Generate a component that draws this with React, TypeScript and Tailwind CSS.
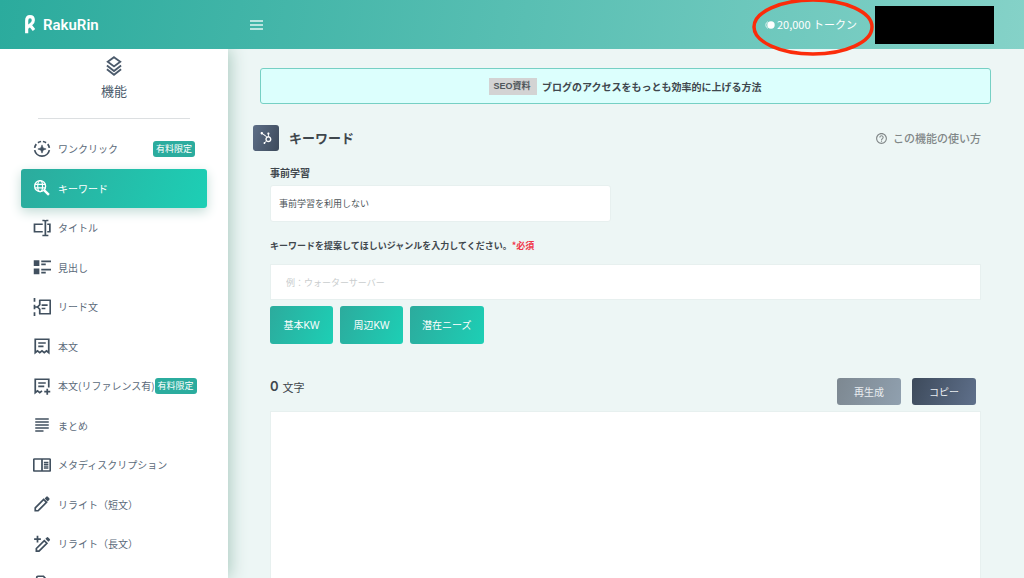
import type { ReactNode } from "react";
import { FaHubspot } from "react-icons/fa";
import { MdHelpOutline } from "react-icons/md";

function Icon({ children }: { children: ReactNode }) {
  return (
    <svg
      viewBox="0 0 24 24"
      className="size-[18px] shrink-0"
      fill="none"
      stroke="currentColor"
      strokeWidth="2.3"
      aria-hidden="true"
    >
      {children}
    </svg>
  );
}

type Item = { label?: string; icon: ReactNode; active?: boolean; badge?: "end" | "inline" };

const items: Item[] = [
  {
    label: "ワンクリック",
    badge: "end",
    icon: (
      <Icon>
        <path d="M2.2 13.5a10 10 0 0 0 19.6 0" />
        <path d="M2.2 10.5A10 10 0 0 1 4.4 5.5M6.6 3.6A10 10 0 0 1 10.8 2M13.2 2a10 10 0 0 1 4.2 1.6M19.6 5.5a10 10 0 0 1 2.2 5" />
        <path d="M12 6.5l1.5 4 4 1.5-4 1.5-1.5 4-1.5-4-4-1.5 4-1.5z" fill="currentColor" stroke="currentColor" strokeWidth="0.8" />
      </Icon>
    ),
  },
  {
    label: "キーワード",
    active: true,
    icon: (
      <Icon>
        <circle cx="9.5" cy="9.5" r="7.3" strokeWidth="1.8" />
        <ellipse cx="9.5" cy="9.5" rx="3.2" ry="7.3" strokeWidth="1.6" />
        <path d="M2.5 7.2h14M2.5 11.8h14" strokeWidth="1.6" />
        <path d="M14.8 14.8l6.4 6.4" strokeWidth="3.2" />
      </Icon>
    ),
  },
  {
    label: "タイトル",
    icon: (
      <Icon>
        <path d="M13 7H2v10h11M19 7h3.500v10H19" />
        <path d="M12.5 2H15q1.5 0 1.5 1.5Q16.5 2 18 2h2.5M16.5 3v18M12.5 22H15q1.5 0 1.5-1.5Q16.5 22 18 22h2.5" />
      </Icon>
    ),
  },
  {
    label: "見出し",
    icon: (
      <Icon>
        <path d="M1 3h7.5v7.5H1zM1 14h7.5v7.5H1z" fill="currentColor" stroke="none" />
        <path d="M11 4.5h13M11 8.5h6M11 15.5h13M11 19.5h6" />
      </Icon>
    ),
  },
  {
    label: "リード文",
    icon: (
      <Icon>
        <path d="M2 0v5M2 9v6M2 19v5M2 12h5" />
        <path d="M9 3h14v18H9v-6l-3-3 3-3z" strokeLinejoin="round" />
        <path d="M11.500 9.500h8M11.500 14h5" />
      </Icon>
    ),
  },
  {
    label: "本文",
    icon: (
      <Icon>
        <path d="M3 3h18v18l-3-2.5-3 2.5-3-2.5-3 2.5-3-2.5-3 2.5z" />
        <path d="M7 8h10M7 12.5h7" />
      </Icon>
    ),
  },
  {
    label: "本文(リファレンス有)",
    badge: "inline",
    icon: (
      <Icon>
        <path d="M21 14V3H3v18l3-2.5 3 2.5 3-2.5M7 8h10M7 12.5h8M19 15.5v8M15 19.5h8" />
      </Icon>
    ),
  },
  {
    label: "まとめ",
    icon: (
      <Icon>
        <path d="M3 4h18M3 8h18M3 12h18M3 16h18M3 20h11" />
      </Icon>
    ),
  },
  {
    label: "メタディスクリプション",
    icon: (
      <Icon>
        <rect x="1" y="4" width="22" height="16" rx="1" />
        <path d="M12 4v16" />
        <path d="M14.5 8.5h6M14.5 11h6M14.5 13.5h6M14.5 16h6" strokeWidth="1.7" />
      </Icon>
    ),
  },
  {
    label: "リライト（短文）",
    icon: (
      <Icon>
        <path d="M3 17.200v3.800h3.800L18 9.800 14.200 6z" />
        <path d="M15.500 4.500l2.200-2.200q1-1 2 0l2 2q1 1 0 2L19.500 8.500z" fill="currentColor" stroke="none" />
      </Icon>
    ),
  },
  {
    label: "リライト（長文）",
    icon: (
      <Icon>
        <path d="M6 1v9M1.5 5.5h9" />
        <path d="M4.500 18v3.500H8L18.500 11 15 7.500z" />
        <path d="M16.500 5l1.800-1.800q1-1 2 0l2 2q1 1 0 2L20.500 9z" fill="currentColor" stroke="none" />
      </Icon>
    ),
  },
  {
    icon: (
      <Icon>
        <path d="M5 22V4.500Q5 3 6.500 3H14l2.500 3v16" />
      </Icon>
    ),
  },
];

function Badge() {
  return (
    <span className="rounded-[3px] bg-[#2bac9e] px-[3px] text-[9px] leading-4 whitespace-nowrap text-white">有料限定</span>
  );
}

function Sidebar() {
  return (
    <aside className="z-10 w-[228px] shrink-0 overflow-hidden bg-white shadow-[2px_0_16px_#a9c9be]">
      <div className="flex flex-col items-center pt-[7px] text-[#4b5a6b]">
        <svg viewBox="0 0 24 24" className="size-5" fill="none" stroke="currentColor" strokeWidth="2.2" aria-hidden="true">
          <path d="M12 1.5L19.5 7 12 12.5 4.5 7zM3.500 11.500l8.500 6.500 8.500-6.500M3.500 16l8.500 6.500 8.500-6.500" />
        </svg>
        <h2 className="mt-[5px] text-[13px] leading-5">機能</h2>
      </div>
      <hr className="mx-[38px] mt-[17px] border-[#dcdfe1]" />
      <nav className="mt-[10px] px-[21px]">
        <ul className="grid h-[474px] auto-rows-fr">
          {items.map((item, index) => (
            <li key={index}>
              <a
                href="#"
                className={
                  item.active
                    ? "flex h-full items-center rounded-[3px] bg-linear-[110deg] from-[#2cab9d] to-[#1dcfb5] pl-3 text-white shadow-[0_4px_12px_#c4dcd7]"
                    : "flex h-full items-center pl-3 text-[#41505f]"
                }
              >
                {item.icon}
                {item.label && (
                  <span
                    className={
                      item.active
                        ? "ml-[7px] text-[10px] whitespace-nowrap"
                        : "ml-[7px] text-[10px] whitespace-nowrap text-[#5b6a7a]"
                    }
                  >
                    {item.label}
                  </span>
                )}
                {item.badge && (
                  <span className={item.badge === "end" ? "mr-3 ml-auto flex" : "flex"}>
                    <Badge />
                  </span>
                )}
              </a>
            </li>
          ))}
        </ul>
      </nav>
    </aside>
  );
}

function Header() {
  return (
    <header className="relative z-20 flex h-[49px] shrink-0 items-center bg-linear-[100deg] from-[#2bab9d] to-[#85d2c8] pr-[30px] text-white">
      <a href="#" className="flex w-[228px] items-center gap-2 pl-[25px]">
        <svg viewBox="0 0 30 57" className="h-[19px] w-[10px]" fill="none" stroke="currentColor" aria-hidden="true">
          <path d="M5 55V17Q5 5 15 5t10 11q0 7-6 11L6 38M15 30l12 15" strokeWidth="9.5" />
        </svg>
        <span className="font-['Roboto',sans-serif] text-[15px] leading-5 font-semibold">RakuRin</span>
      </a>
      <button type="button" aria-label="メニュー" className="ml-[22px] text-[#e2f5f2]">
        <svg viewBox="0 0 13 10" className="h-[10px] w-[13px]" fill="none" stroke="currentColor" strokeWidth="1.6" aria-hidden="true">
          <path d="M0 1h13M0 5h13M0 9h13" />
        </svg>
      </button>
      <div className="relative ml-auto flex h-[54px] w-[120px] items-center justify-center gap-0.5 pr-1 text-[11px]">
        <svg viewBox="0 0 10 8" className="h-2 w-[10px] shrink-0" aria-hidden="true">
          <circle cx="6" cy="4" r="3.7" fill="#fff" />
          <path d="M3 .6a3.7 3.7 0 0 0 0 6.800" fill="none" stroke="#fff" strokeOpacity=".7" />
        </svg>
        <span className="whitespace-nowrap">20,000 トークン</span>
        <svg viewBox="0 0 122 58" className="absolute top-0 -left-px h-[58px] w-[122px]" fill="none" aria-hidden="true">
          <ellipse cx="61" cy="29" rx="59" ry="27" stroke="#fb2c0a" strokeWidth="3.5" />
        </svg>
      </div>
      <div className="ml-0.5 h-[38px] w-[119px] bg-black" />
    </header>
  );
}

const greenButton =
  "h-[38px] min-w-[63px] rounded-[3px] bg-linear-[110deg] from-[#2cab9d] to-[#1dcfb5] px-3 font-['Liberation_Sans','Noto_Sans_CJK_JP',sans-serif] text-[10px] text-white";

export default function App() {
  return (
    <div
      lang="ja"
      className="flex h-screen flex-col overflow-hidden bg-[#edf6f5] font-['Noto_Sans_CJK_JP',sans-serif] text-[#3f474d]"
    >
      <Header />
      <div className="flex min-h-0 flex-1">
        <Sidebar />
        <main className="flex min-w-0 flex-1 flex-col overflow-hidden pt-[19px]">
          <a
            href="#"
            className="mr-[33px] ml-8 flex h-9 shrink-0 items-center justify-center gap-[5px] rounded-[3px] border border-[#76d0c4] bg-[#dcfffd] text-[10px] font-bold"
          >
            <span className="bg-[#d3d3d3] px-1 font-['Liberation_Sans','Noto_Sans_CJK_JP',sans-serif] text-[9px] leading-[17px] font-bold text-[#50575b]">
              SEO資料&nbsp;
            </span>
            ブログのアクセスをもっとも効率的に上げる方法
          </a>

          <div className="mt-[21px] mr-[43px] ml-[25px] flex items-center">
            <span className="flex size-[26px] items-center justify-center rounded-[3px] bg-linear-[110deg] from-[#5d6e87] to-[#3d4a5b] text-white">
              <FaHubspot className="size-3" />
            </span>
            <h1 className="ml-[10px] text-[13px] leading-5 font-bold">キーワード</h1>
            <a href="#" className="ml-auto flex items-center gap-[5px] text-[11px] font-medium text-[#818788]">
              <MdHelpOutline className="size-[13px]" />
              この機能の使い方
            </a>
          </div>

          <form className="mt-[14px] mr-[43px] ml-[42px] flex min-h-0 flex-1 flex-col">
            <label htmlFor="training" className="text-[10px] leading-4 font-bold">
              事前学習
            </label>
            <select
              id="training"
              className="mt-1 h-[37px] w-[48%] shrink-0 appearance-none rounded-[3px] border border-[#e7f0ef] bg-white px-2 text-[9px] text-[#4c5459]"
            >
              <option>事前学習を利用しない</option>
            </select>
            <label htmlFor="genre" className="mt-4 text-[9px] leading-4 font-bold">
              キーワードを提案してほしいジャンルを入力してください。<span className="text-[#f0384a]">*必須</span>
            </label>
            <input
              id="genre"
              type="text"
              placeholder="例：ウォーターサーバー"
              className="mt-[10px] h-9 shrink-0 border border-[#e7f0ef] bg-white px-[15px] text-[9px] placeholder:text-[#c9cdce]"
            />
            <div className="mt-1.5 flex shrink-0 gap-[7px]">
              <button type="button" className={greenButton}>基本KW</button>
              <button type="button" className={greenButton}>周辺KW</button>
              <button type="button" className={greenButton}>潜在ニーズ</button>
            </div>

            <div className="mt-[34px] mr-[5px] flex h-[27px] shrink-0 gap-[11px]">
              <p className="mr-auto flex h-[18px] items-center gap-1 text-[11px]">
                <span className="font-['Inter',sans-serif] text-[13px] font-semibold">0</span>
                文字
              </p>
              <button
                type="button"
                disabled
                className="w-16 rounded-[3px] bg-linear-[110deg] from-[#7d8891] to-[#90a0af] text-[10px] text-[#e9edf0]"
              >
                再生成
              </button>
              <button
                type="button"
                className="w-16 rounded-[3px] bg-linear-[110deg] from-[#3d4a5b] to-[#5f708b] text-[10px] text-[#e9edf0]"
              >
                コピー
              </button>
            </div>
            <textarea
              aria-label="生成結果"
              className="mt-1.5 min-h-0 flex-1 resize-none border border-b-0 border-[#e7f0ef] bg-white p-3 text-[10px]"
            />
          </form>
        </main>
      </div>
    </div>
  );
}
